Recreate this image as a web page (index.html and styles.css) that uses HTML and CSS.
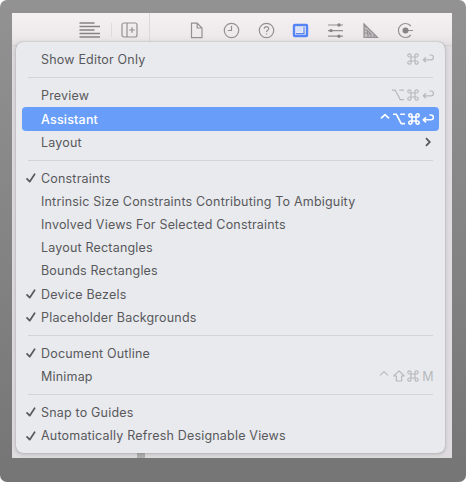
FILE: index.html
```html
<!DOCTYPE html>
<html lang="en">
<head>
<meta charset="utf-8">
<title>Editor options</title>
<link rel="stylesheet" href="styles.css">
</head>
<body>
<svg class="defs" width="0" height="0" aria-hidden="true">
  <symbol id="check" viewBox="0 0 10 10"><path d="M1 5.8 3.7 8.7 8.6 1.2" fill="none" stroke="currentColor" stroke-width="1.7" stroke-linecap="round" stroke-linejoin="round"/></symbol>
  <symbol id="cmd" viewBox="0 0 12 12"><path d="M4 4H8V8H4ZM4 4H2.6A1.6 1.6 0 1 1 4 2.4ZM8 4V2.4A1.6 1.6 0 1 1 9.4 4ZM8 8H9.4A1.6 1.6 0 1 1 8 9.6ZM4 8V9.6A1.6 1.6 0 1 1 2.6 8Z"/></symbol>
  <symbol id="ret" viewBox="0 0 12 12"><path d="M7.5 2H9A2.3 2.3 0 0 1 9 6.8H1.5M4 4.3 1.3 6.8 4 9.3"/></symbol>
  <symbol id="opt" viewBox="0 0 14 12"><path d="M1 1.2H4.3L9.2 10.6H13M8.3 1.2H13"/></symbol>
  <symbol id="ctrl" viewBox="0 0 10 12"><path d="M1 5.4 5 1.6 9 5.4"/></symbol>
  <symbol id="shift" viewBox="0 0 12 12"><path d="M6 .8 11.2 6H8.6V11H3.4V6H.8Z"/></symbol>
</svg>
<div class="frame">
  <div class="window">
    <header class="toolbar">
      <div class="tools-left">
        <svg class="lines" width="22" height="18" viewBox="0 0 22 18"><path d="M.5 2H15.5M.5 5.5H21M.5 9H15.5M.5 12.5H21M.5 16H21"/></svg>
        <i class="divider"></i>
        <svg width="17" height="16" viewBox="0 0 17 16"><rect x="1" y="1" width="15" height="14" rx="2"/><path d="M6 1V15M8.2 8H13.8M11 5.2V10.8"/></svg>
      </div>
      <div class="tools-right">
        <svg width="17" height="17" viewBox="0 0 17 17"><path d="M3.5 1.2H9.2L14 6V15.7H3.5ZM9.2 1.2V6H14"/></svg>
        <svg width="17" height="17" viewBox="0 0 17 17"><circle cx="8.5" cy="8.5" r="7.2"/><path d="M8.5 3.8V8.5H4.8"/></svg>
        <svg width="17" height="17" viewBox="0 0 17 17"><circle cx="8.5" cy="8.5" r="7.2"/><path d="M6.3 6.8C6.3 4 10.7 4 10.7 6.7 10.7 8.2 8.5 8.2 8.5 9.9M8.5 11.4V12.4"/></svg>
        <svg class="active" width="17" height="17" viewBox="0 0 17 17"><rect x="2" y="3" width="13" height="11" rx=".8" stroke-width="2.4"/><rect class="solid" x="4.2" y="5.2" width="5.8" height="4.6"/><path d="M12 5V11.6H4"/></svg>
        <svg width="17" height="17" viewBox="0 0 17 17"><path d="M1 3H16M1 8.6H16M1 14.2H16"/><g class="solid"><circle cx="12" cy="3" r="1.7"/><circle cx="4" cy="8.6" r="1.7"/><circle cx="12" cy="14.2" r="1.7"/></g></svg>
        <svg class="square" width="17" height="17" viewBox="0 0 17 17"><path d="M2 2 15.5 15.5H2ZM5.4 8.8V12.2H8.8ZM2.5 5H4.5M2.5 8H4.5M2.5 11H4.5M6 15V13M9 15V13M12 15V13"/></svg>
        <svg width="17" height="17" viewBox="0 0 17 17"><path d="M13.8 4A7 7 0 1 0 13.8 13M8.5 8.5H16"/><circle class="solid" cx="8.5" cy="8.5" r="3"/></svg>
      </div>
    </header>
    <div class="canvas"><i class="handle"></i></div>
  </div>
  <nav class="menu">
    <div class="item"><span class="mark"></span><span class="label">Show Editor Only</span><span class="keys"><svg class="k"><use href="#cmd"/></svg><svg class="k"><use href="#ret"/></svg></span></div>
    <hr>
    <div class="item"><span class="mark"></span><span class="label">Preview</span><span class="keys"><svg class="k wide"><use href="#opt"/></svg><svg class="k"><use href="#cmd"/></svg><svg class="k"><use href="#ret"/></svg></span></div>
    <div class="item selected"><span class="mark"></span><span class="label">Assistant</span><span class="keys"><svg class="k narrow"><use href="#ctrl"/></svg><svg class="k wide"><use href="#opt"/></svg><svg class="k"><use href="#cmd"/></svg><svg class="k"><use href="#ret"/></svg></span></div>
    <div class="item"><span class="mark"></span><span class="label">Layout</span><svg class="chevron" width="6" height="10" viewBox="0 0 6 10"><path d="M1 1.2 4.8 5 1 8.8"/></svg></div>
    <hr>
    <div class="item"><span class="mark"><svg><use href="#check"/></svg></span><span class="label">Constraints</span></div>
    <div class="item"><span class="mark"></span><span class="label">Intrinsic Size Constraints Contributing To Ambiguity</span></div>
    <div class="item"><span class="mark"></span><span class="label">Involved Views For Selected Constraints</span></div>
    <div class="item"><span class="mark"></span><span class="label">Layout Rectangles</span></div>
    <div class="item"><span class="mark"></span><span class="label">Bounds Rectangles</span></div>
    <div class="item"><span class="mark"><svg><use href="#check"/></svg></span><span class="label">Device Bezels</span></div>
    <div class="item"><span class="mark"><svg><use href="#check"/></svg></span><span class="label">Placeholder Backgrounds</span></div>
    <hr>
    <div class="item"><span class="mark"><svg><use href="#check"/></svg></span><span class="label">Document Outline</span></div>
    <div class="item"><span class="mark"></span><span class="label">Minimap</span><span class="keys"><svg class="k narrow"><use href="#ctrl"/></svg><svg class="k shift"><use href="#shift"/></svg><svg class="k"><use href="#cmd"/></svg><span class="letter">M</span></span></div>
    <hr>
    <div class="item"><span class="mark"><svg><use href="#check"/></svg></span><span class="label">Snap to Guides</span></div>
    <div class="item"><span class="mark"><svg><use href="#check"/></svg></span><span class="label">Automatically Refresh Designable Views</span></div>
  </nav>
</div>
</body>
</html>
```

FILE: styles.css
```css
* { box-sizing: border-box; }
body { margin: 0; background: #fff; font-family: Inter, "Liberation Sans", sans-serif; }
.defs { position: absolute; }
.frame {
  position: relative;
  width: 466px;
  height: 482px;
  padding: 13px 14px 24px 12px;
  border-radius: 7px;
  background: linear-gradient(#929292, #757575);
}
.window { display: flex; flex-direction: column; height: 445px; background: #dedcde; }
.toolbar {
  display: flex;
  height: 33px;
  flex: none;
  background: linear-gradient(#f5f1f2, #eeeaec 70%, #e2dfe2);
  border-bottom: 1px solid #d3d0d2;
}
.toolbar svg { fill: none; stroke: #929092; stroke-width: 1.2; flex: none; }
.toolbar .solid { fill: #858385; stroke: none; }
.toolbar .active { stroke: #5484f6; }
.toolbar .active .solid { fill: #d5dffa; }
.toolbar .square { fill: #c4c1c3; }
.tools-left {
  display: flex;
  align-items: center;
  width: 138px;
  height: 34px;
  padding-left: 67px;
  border-right: 1px solid #dcd8da;
}
.toolbar .lines { stroke: #858385; stroke-width: 1.3; }
.divider { width: 1px; height: 14px; margin: 0 9px 0 10px; background: #dedadd; }
.tools-right { display: flex; align-items: center; gap: 17.8px; height: 34px; padding-left: 38px; }
.canvas { display: flex; flex: 1; align-items: flex-end; padding-left: 125px; }
.handle { width: 8px; height: 5px; background: #b0afb1; }
.menu {
  position: absolute;
  left: 16px;
  top: 42px;
  width: 429px;
  height: 411px;
  padding: 6.3px 6px 0;
  border-radius: 7px;
  background: #e8eaee;
  box-shadow: 0 0 1px rgba(0,0,0,.35), 0 1px 4px rgba(0,0,0,.18);
}
.item {
  display: flex;
  align-items: center;
  height: 23.2px;
  padding: 0 5px 0 4px;
  color: #59595c;
  font-size: 12.5px;
  letter-spacing: .19px;
  line-height: 23px;
  white-space: nowrap;
}
.mark { display: flex; width: 15px; flex: none; }
.mark svg { width: 10px; height: 10px; }
.label { flex: 1; }
.selected { background: #689efa; border-radius: 4px; color: #fff; font-weight: 500; }
.keys { display: flex; align-items: center; gap: 2.7px; padding-bottom: 1px; color: #b7b9bd; }
.k { width: 12px; height: 12px; fill: none; stroke: currentColor; stroke-width: 1.2; stroke-linejoin: round; }
.wide { width: 14px; }
.narrow { width: 10px; }
.shift { margin-left: 1px; }
.selected .keys { gap: 2px; color: #fff; }
.selected .k { stroke-width: 1.6; }
.letter { width: 12px; padding-top: 1px; text-align: center; letter-spacing: 0; }
.chevron { margin-right: 3px; fill: none; stroke: #59595c; stroke-width: 1.8; }
hr { height: 1px; margin: 5.9px 6px; border: 0; background: #d2d4d8; }
```
